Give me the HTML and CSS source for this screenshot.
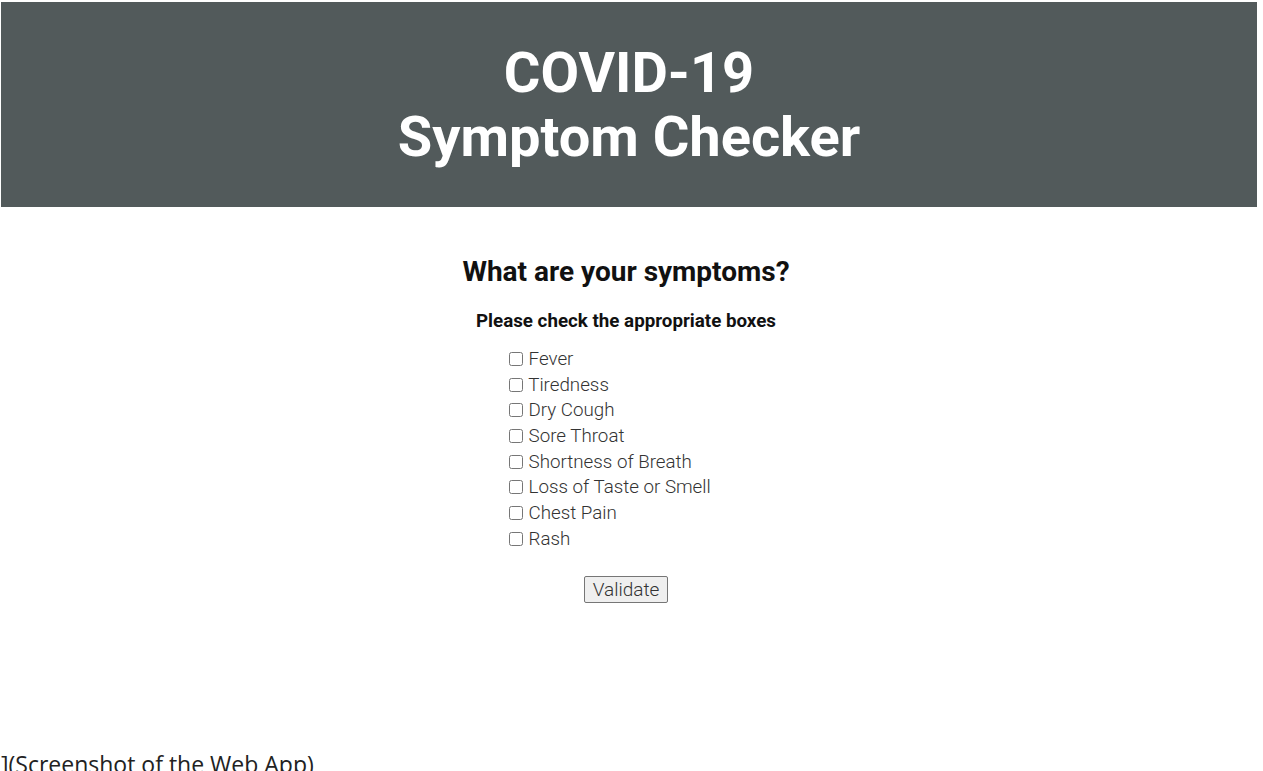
FILE: index.html
```html
<!DOCTYPE html>
<html lang="en">
<head>
<meta charset="utf-8">
<title>COVID-19 Symptom Checker</title>
<link rel="stylesheet" href="styles.css">
</head>
<body>
<div class="page">
  <header class="banner">
    <h1 class="title">COVID-19<br>Symptom Checker</h1>
  </header>
  <main class="main">
    <h2 class="question">What are your symptoms?</h2>
    <h3 class="hint">Please check the appropriate boxes</h3>
    <form class="form">
      <div class="list">
        <label class="item"><input type="checkbox" class="box"> Fever</label>
        <label class="item"><input type="checkbox" class="box"> Tiredness</label>
        <label class="item"><input type="checkbox" class="box"> Dry Cough</label>
        <label class="item"><input type="checkbox" class="box"> Sore Throat</label>
        <label class="item"><input type="checkbox" class="box"> Shortness of Breath</label>
        <label class="item"><input type="checkbox" class="box"> Loss of Taste or Smell</label>
        <label class="item"><input type="checkbox" class="box"> Chest Pain</label>
        <label class="item"><input type="checkbox" class="box"> Rash</label>
      </div>
      <button type="button" class="validate">Validate</button>
    </form>
  </main>
  <p class="caption">](Screenshot of the Web App)</p>
</div>
</body>
</html>
```

FILE: styles.css
```css
html, body {
  margin: 0;
  padding: 0;
  background: #ffffff;
}

.page {
  padding: 2px 0 0 1px;
  font-family: Roboto, "Liberation Sans", sans-serif;
}

.banner {
  width: 1256px;
  height: 205px;
  background: #525a5b;
  display: flex;
  align-items: center;
  justify-content: center;
}

.title {
  margin: 0;
  color: #ffffff;
  font-family: Roboto, sans-serif;
  font-weight: 700;
  font-size: 56px;
  line-height: 64px;
  text-align: center;
}

.main {
  width: 1250px;
  display: flex;
  flex-direction: column;
  align-items: center;
}

.question {
  margin: 48px 0 0 0;
  font-size: 28px;
  line-height: 33px;
  font-weight: 700;
  color: #111111;
}

.hint {
  margin: 22px 0 0 0;
  font-size: 18.75px;
  line-height: 22px;
  font-weight: 700;
  color: #111111;
}

.form {
  display: flex;
  flex-direction: column;
  align-items: center;
}

.list {
  width: 234px;
  margin-top: 14px;
  display: flex;
  flex-direction: column;
}

.item {
  display: flex;
  align-items: center;
  height: 25.7px;
  font-size: 18.75px;
  font-weight: 300;
  color: #333333;
  white-space: pre;
}

.box {
  margin: 0 1px 0 0;
  width: 14px;
  height: 14px;
}

.validate {
  margin-top: 24px;
  font-family: Roboto, sans-serif;
  font-size: 19px;
  font-weight: 300;
  color: #333333;
  padding: 0 8px;
  height: 27px;
  background: #efefef;
  border: 1px solid #767676;
  border-radius: 2px;
}

.caption {
  margin: 146px 0 0 0;
  font-family: "Open Sans", "Noto Sans", sans-serif;
  font-size: 23px;
  line-height: 31px;
  color: #222222;
}
```
